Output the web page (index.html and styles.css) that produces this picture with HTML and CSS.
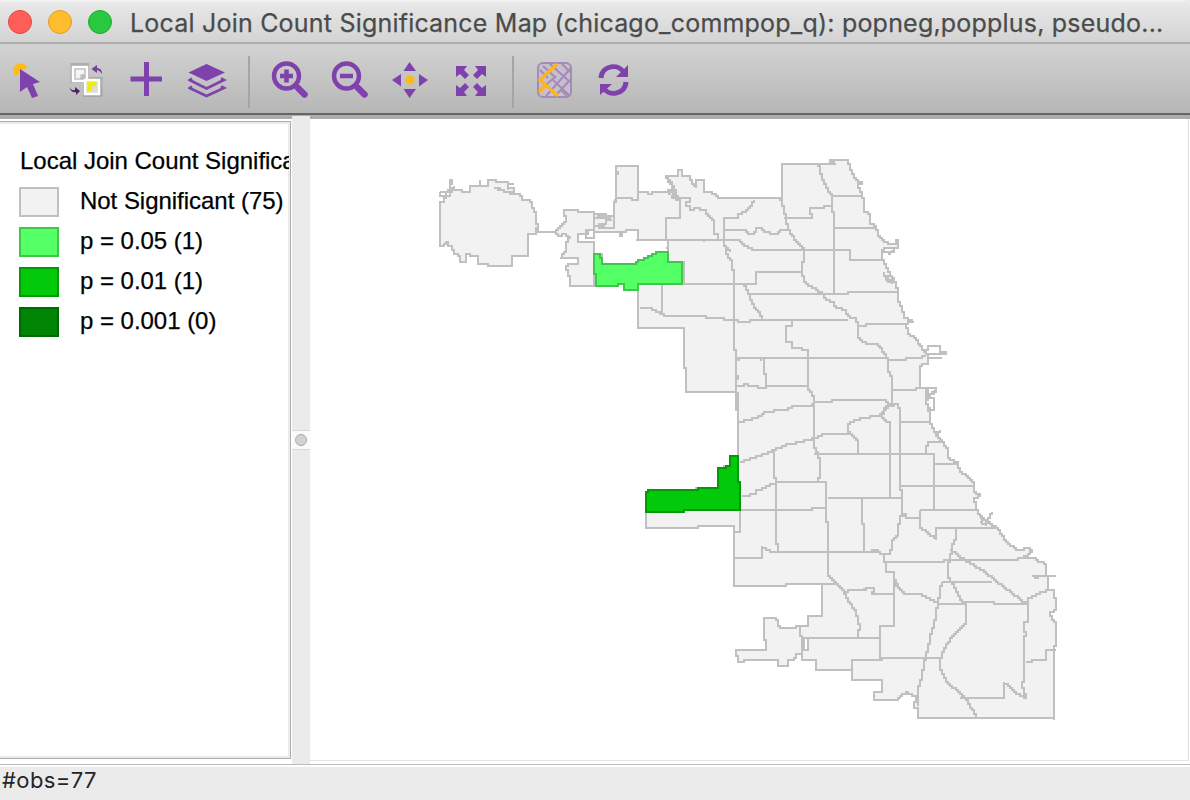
FILE: index.html
```html
<!DOCTYPE html>
<html lang="en">
<head>
<meta charset="utf-8">
<title>Local Join Count Significance Map</title>
<link rel="stylesheet" href="styles.css">
</head>
<body>
<div class="window">
  <header class="titlebar">
    <span class="light close"></span><span class="light minimize"></span><span class="light maximize"></span>
    <h1 class="title">Local Join Count Significance Map (chicago_commpop_q): popneg,popplus, pseudo...</h1>
  </header>
  <nav class="toolbar">
    <svg class="tool" viewBox="8 60 40 40"><path d="M16 74A5.2 5.2 0 1 1 25 67L20 69Z" fill="#fdbb16" stroke="#fdbb16" stroke-width="3"/><path d="M20 69L40 82L33 84L38 96L32 98L27 87L20 92Z" fill="#7f42ad"/></svg>
    <svg class="tool" viewBox="68 60 40 40"><path d="M70.500 63H89V77H102.500V97H83V83H70.500Z" fill="#999" opacity=".6"/><rect x="73" y="67" width="14" height="14" fill="#bbb" stroke="#fff" stroke-width="2.500"/><path d="M76 78V70H84V74H80V78Z" fill="#f5f5f5" stroke="#eee"/><rect x="85" y="80" width="14" height="14" fill="#ddd" stroke="#fff" stroke-width="2.500"/><path d="M87.500 91V82H96.500V86H92V91Z" fill="#f4ed00"/><path d="M91.500 69L97 65V68Q102 68 102 74Q99 70 97 70V73Z" fill="#73409b"/><path d="M70 87Q71 91 75 90V87L80 91L76 95V92Q70 93 70 87Z" fill="#4a235f"/></svg>
    <svg class="tool" viewBox="128 60 40 40"><path d="M146.500 62V96M130.500 79H162" stroke="#7f42ad" stroke-width="5"/></svg>
    <svg class="tool" viewBox="188 60 40 40"><path d="M206.500 64L225 72.500L206.500 81L188.500 72.500Z" fill="#7f42ad"/><path d="M192 78.500L189.500 80L206.500 88.500L224 80L221 78.500M192 86.500L189.500 88L206.500 96L224 88L221 86.500" fill="none" stroke="#7f42ad" stroke-width="2.600"/></svg>
    <span class="divider"></span>
    <svg class="tool" viewBox="268 60 40 40"><circle cx="286.500" cy="76" r="12.500" fill="none" stroke="#7f42ad" stroke-width="4.400"/><path d="M280 76H293M286.500 69.500V82.500M295.500 85L305 95" stroke="#7f42ad" stroke-width="4.600"/><path d="M298 88L304.500 94.500" stroke="#7f42ad" stroke-width="6.500" stroke-linecap="round"/></svg>
    <svg class="tool" viewBox="328 60 40 40"><circle cx="346.500" cy="76" r="12.500" fill="none" stroke="#7f42ad" stroke-width="4.400"/><path d="M340 76H353M355.500 85L365 95" stroke="#7f42ad" stroke-width="4.600"/><path d="M358 88L364.500 94.500" stroke="#7f42ad" stroke-width="6.500" stroke-linecap="round"/></svg>
    <svg class="tool" viewBox="388 60 40 40"><path d="M409.500 62L416 71H403.500ZM409.500 98L403.500 89H416ZM392 80L401 74V86.500ZM428 80L419 74V86.500Z" fill="#7f42ad"/><circle cx="410" cy="80" r="4.500" fill="#fdbb16"/></svg>
    <svg class="tool" viewBox="448 60 40 40"><path d="M456 66H467L464 70L469 75L465 79L460 74L456 77ZM486 66H475L478 70L473 75L477 79L482 74L486 77ZM456 96H467L464 92L469 87L465 83L460 88L456 85ZM486 96H475L478 92L473 87L477 83L482 88L486 85Z" fill="#7f42ad"/></svg>
    <span class="divider second"></span>
    <svg class="tool" viewBox="532 60 40 40"><rect x="538" y="63" width="33" height="34" rx="5" fill="#c5c0cb" stroke="#a58aba" stroke-width="2"/><path d="M543 66L556 78M550 64L570 82M562 64L570 72M571 68L546 96M570 80L555 96M553 80L570 96M540 70L548 78M540 90L556 76M561 90L567 96" stroke="#a58aba" stroke-width="2" fill="none"/><path d="M557 64L540 80L558 96M539 92L547 84" fill="none" stroke="#fdb51f" stroke-width="3.200"/></svg>
    <svg class="tool" viewBox="592 60 40 40"><path d="M601 78C602 65 619 63 624 73M626 82C625 95 608 97 603 87" fill="none" stroke="#7f42ad" stroke-width="5"/><path d="M628 65V77H616ZM600 95V84H612Z" fill="#7f42ad"/></svg>
  </nav>
  <main class="workspace">
    <aside class="legend">
      <div class="legend-title">Local Join Count Significance Map</div>
      <div class="entry"><i class="swatch none"></i><span>Not Significant (75)</span></div>
      <div class="entry"><i class="swatch p05"></i><span>p = 0.05 (1)</span></div>
      <div class="entry"><i class="swatch p01"></i><span>p = 0.01 (1)</span></div>
      <div class="entry"><i class="swatch p001"></i><span>p = 0.001 (0)</span></div>
    </aside>
    <div class="splitter"><span class="grip"><i></i></span></div>
    <section class="map-pane">
      <svg class="map" viewBox="310 119 878 641">
        <!-- City extent -->
        <g class="land">
          <path d="M440 246V202L444 200V197L449 194L452 190H462V192H470V186H480L487 186V180H494L496 182H504L508 184V188H514V191H508L500 188L494 188L505 192L512 194H520L522 199L529 200L531 206L533 212L536 214V224L538 226L536 230L537 232H555H537L536 234H528V256H511V266H491L488 264H478V256H470V254H466V261H460V256L453 251L452 246L448 245V242L444 246Z"/>
          <path d="M555 229L562 223L565 219L564 210H578V212L592 212L594 214L613 216L614 202H616V176L618 172L616 170V166H638V191L641 191H645L648 194H652V192H662L670 189L673 187L665 176H677V170H682V176H687L693 185L696 187V180H704V192L709 192L718 198H780L782 196V164H835V163L830 160H848L850 169L853 176L856 180L862 183L858 185L861 195L863 200V212L868 213L869 216V224L875 226L877 235L883 242L889 244H896V240L898 242V247H883L882 251V258L886 265L888 271L894 279L897 292L898 302L901 307L903 317L908 320L914 321L906 324L907 334L915 339L919 346L925 353L928 356V363L920 366V388H926V402L930 412V422L934 430L935 435L941 442L947 450L948 457L957 464L959 471L965 476L973 483L974 492L979 495L974 500L978 513L982 517L995 528L1003 537L1005 542L1015 549L1027 548L1031 552L1025 558H1033L1037 562H1043L1046 567V576H1048V589L1053 590L1054 597L1056 599L1055 610L1050 614L1051 620L1056 623V642L1054 650V720V718H918V708H914L916 695L912 693L907 692L901 696L898 700H874V692H882V680H852V670H816V660H802V654H797L793 660H788V666H778V660H747L744 662H738L736 650H766V640H764V618H776L778 624L780 628H793L795 626H808V616H822V584H787L786 586H734V532V526H700L698 528H646V492L648 490H696V488H718V468H724V465H730V456H738V410H736V392H686V368H684V328H640L638 326V284H683V262H668V252H655L647 257L636 264H601V254H594V286H573L570 283V278L567 272L566 266L568 264H578V258H560L565 250V245L567 238L565 234L562 235H558L555 229Z"/>
        </g>
        <path class="hole" d="M578 234V242H594V254H601V264H636L655 252H668V240H638V230H628L626 232H597L594 230H586L588 234L585 235V234Z"/>
        <path class="hole" d="M803 638H808V650H803Z"/>
        <!-- Shared borders, northwest -->
        <g class="line">
          <path d="M480 186V180M440 192V196H445V192H440M445 191L449 188V180H451L449 187L453 190M454 190V185M508 184H513M508 188V190M578 234H586M586 230V238H594V232M594 214V230M594 218H609V216L613 218V228H597M597 223H606V220H611M604 223V226H594M593 214L611 219M620 232V236H622V232M570 235L567 239"/>
          <path d="M614 200L616 198H630L632 200H638V192M665 176L673 188L670 192L662 192M673 188L676 195L677 198H690V202H686V206H690V210H694V208L704 209L708 216L713 222L714 234H717L718 240M667 193L672 190L676 192L671 198L680 202V218H666V240M671 194L677 200M673 188V194L678 199"/>
          <path d="M636 240H740L741 244L747 247L752 250H847L849 252L850 259H882M754 199L751 206L746 211L738 215V218H724V240L726 253L732 261L733 280L734 284V350H736V392M724 230H745L747 234H753L756 228H760L763 232L772 234H777L780 230H789"/>
          <path d="M780 198L783 210L786 218L788 230L792 236L797 243L803 249V260L801 265V271L804 281L808 285L815 289L821 294L826 300L834 303L836 307L843 309L848 316L849 318H856L858 327V337L862 341L868 343H877L879 348L885 355L887 362V370L891 378L892 383V403L888 406L879 416L863 418L852 421L848 425V432L854 438L858 442V454"/>
          <path d="M683 284H756V272H801M743 284L750 297L755 310L759 314L762 320M749 294H848V292H897M662 284V314M639 307L646 308L653 310L663 315H706V318H720L723 320H737V322H750V320H848M818 164L822 177L826 188L831 196H861M832 196V212H834V294M784 218H812V214H810V208H819L823 206H832V212M834 228H876M858 326L863 326L866 324H906M668 240V252M666 248H668M703 240V242M726 248L730 252"/>
        </g>
        <!-- Shared borders, west and central -->
        <g class="line">
          <path d="M792 320V326H786V342H792V347H797L803 350L808 352V388L810 391L813 397L814 403V446L818 454L820 463V476L818 481M736 358H885M764 358V370L766 380V387M736 386L743 386V384H748V386H757V388H766V386H808M738 422L745 420L756 417L763 412L781 410L792 408V406L810 406L814 402H830L832 400H886L887 404H898V408H900V490H902V513L906 518H919M879 416L885 422L890 424V497H892M740 461L751 458L763 453L778 448L788 444L800 441L814 437L823 434H843L848 431"/>
          <path d="M814 454H934V510M926 453V448L928 442H941M900 422H930M892 390H916V388H926M887 360H903L905 358H913L925 355M934 464H957M900 486H973M920 510H978M920 510V528L928 534L935 539V528H998M774 450V476L775 482H826V518L828 526V576L835 584L844 592L850 603L855 612L858 620L860 627L858 632V637M776 482V542L778 545V551H772L765 547L762 546V558H734"/>
          <path d="M741 495H750V493H755V490L763 487L770 484L776 483M740 510H810L812 508H826M740 510V532H734M827 498H902M862 498V523H864V552M890 486V496M773 552H877L879 554H889L892 546V539L897 533L898 524L900 522V515L906 514V518M872 552V550H878V552M736 360H740M759 360H761M736 375H738V380"/>
          <path d="M738 392V410M736 350V358M814 397V402M890 406L895 404M879 416L888 405L892 404"/>
        </g>
        <!-- Shared borders, south side -->
        <g class="line">
          <path d="M884 554V562H886V572H894V626H880V655L882 660M885 562H942L944 560H1013L1019 558L1025 556M955 528V540L951 546V550L947 565L948 578L951 583L958 593L962 602L966 606V623L953 635L946 645L942 653L940 661V670L948 683L957 692L967 702L971 710L976 716V718M950 550L963 560L983 572L1003 588L1025 603M942 582H992M942 582L938 603L934 625L930 637L928 650L923 663L922 678L918 690L917 705"/>
          <path d="M894 583L903 593H920L925 597L937 603H958L963 602H993L994 604H1027M1027 604L1028 597L1035 593L1040 591L1048 589M1028 604V615L1027 622L1024 624V632H1026V636H1024V682H1022V686L1025 697L1015 692L1010 686L1004 682V698H960M1025 662H1032V660H1046V650H1056M1032 576H1056M1034 577H1038V575"/>
          <path d="M787 584H836M844 592L847 590H866V588H874V592L872 594H894M800 626V633L802 638H880M802 638V660M852 670V660H880L882 658H940M864 588V590M893 580L897 586"/>
        </g>
        <!-- Lakefront piers and harbours -->
        <g class="line">
          <path d="M925 353L928 346H940V352H946V354H928M927 357H941M926 388H936V391L928 397H934V410H928M926 395L934 389M926 388L930 396L925 402L930 409L928 412M935 434L939 430M908 321H914M979 521L985 525L987 517L992 512M980 518L988 524M982 524V518L988 522M882 251H893V247M887 253L891 250M883 271L885 280L891 283L894 279M889 271L887 280L891 281"/>
        </g>
        <path class="sig05" d="M594 254H600L601 264H636L638 260L646 257L655 252H668V262H682V284H638V290H624V284H620L618 286H596V274H594Z"/>
        <path class="sig01" d="M646 491L648 490H695L697 488H718V468H723L725 466H730V456H738V481H740V510H684V512H646Z"/>
      </svg>
    </section>
  </main>
  <footer class="status">#obs=77</footer>
</div>
<script src="map.js"></script>
</body>
</html>
```
FILE: map.js
```js
// Trace every border on a 2px grid so diagonals become stair steps.
const GRID = 2;

function parsePath(d) {
  const tokens = d.match(/[MLHVZ]|[\d.]+/g);
  const subpaths = [];
  let cmd = "M", i = 0, x = 0, y = 0;
  while (i < tokens.length) {
    if (/[A-Z]/.test(tokens[i])) {
      cmd = tokens[i++];
      if (cmd === "Z") {
        const s = subpaths[subpaths.length - 1];
        s.closed = true;
        s.points.push(s.points[0]);
        continue;
      }
      if (cmd === "M") subpaths.push({ points: [], closed: false });
    }
    if (cmd === "H") x = +tokens[i++];
    else if (cmd === "V") y = +tokens[i++];
    else { x = +tokens[i++]; y = +tokens[i++]; }
    subpaths[subpaths.length - 1].points.push([Math.round(x / GRID), Math.round(y / GRID)]);
  }
  return subpaths;
}

function stepPath({ points, closed }) {
  let [x, y] = points[0];
  let d = `M${x * GRID} ${y * GRID}`;
  for (const [tx, ty] of points.slice(1)) {
    const dx = Math.abs(tx - x), dy = Math.abs(ty - y);
    const sx = Math.sign(tx - x), sy = Math.sign(ty - y);
    let err = dx - dy;
    while (x !== tx || y !== ty) {
      const e = 2 * err;
      if (e > -dy) { err -= dy; x += sx; d += `H${x * GRID}`; }
      if (e < dx) { err += dx; y += sy; d += `V${y * GRID}`; }
    }
  }
  return d + (closed ? "Z" : "");
}

document.querySelectorAll(".map path").forEach(path => {
  path.setAttribute("d", parsePath(path.getAttribute("d")).map(stepPath).join(""));
});
```
FILE: styles.css
```css
* { box-sizing: border-box; }
body { margin: 0; background: #ebebeb; overflow: hidden; }
.window { width: 1190px; height: 800px; display: flex; flex-direction: column; background: #ebebeb; }
.titlebar { height: 44px; display: flex; align-items: center; gap: 16px; padding: 1px 0 0 8px; background: linear-gradient(#f4f4f4 0, #e8e8e8 3px, #d3d3d3 42px); border-bottom: 2px solid #adadad; border-radius: 0 8px 0 0; flex: none; }
.light { width: 24px; height: 24px; border-radius: 50%; border: 1px solid #e14640; background: #ff5f57; flex: none; }
.minimize { background: #febc2e; border-color: #dfa023; }
.maximize { background: #28c840; border-color: #1dac2b; }
.title { margin: 0 0 0 2px; padding-top: 3px; color: #4b4b4b; font: 400 25px/40px Inter, sans-serif; letter-spacing: .205px; -webkit-text-stroke: .25px #4b4b4b; white-space: nowrap; }
.toolbar { height: 71px; display: flex; align-items: flex-start; gap: 20px; padding: 16px 0 0 8px; background: linear-gradient(#d3d3d3, #b6b6b6); border-bottom: 2px solid #646864; flex: none; }
.tool { width: 40px; height: 40px; flex: none; }
.divider { width: 2px; height: 52px; margin: -4px -2px 0 0; background: #a5a5a5; flex: none; }
.second { margin-left: 4px; margin-right: -2px; }
.workspace { height: 649px; display: flex; border-top: 4px solid #acacac; background: #fff; flex: none; }
.legend { width: 291px; height: 638px; margin-top: 2px; padding: 19px 0 0 19px; border: solid #adadad; border-width: 1px 1px 1px 0; box-shadow: inset -2px -2px #ebebeb, inset 0 2px #ebebeb; overflow: hidden; flex: none; color: #000; font: 24px/40px "Liberation Sans", Arial, sans-serif; -webkit-text-stroke: .25px #000; }
.legend-title { width: 269px; margin-left: 1px; overflow: hidden; white-space: nowrap; letter-spacing: -.02px; }
.entry { display: flex; align-items: center; gap: 21px; height: 40px; white-space: nowrap; letter-spacing: -.03px; }
.swatch { width: 40px; height: 30px; margin-top: 2px; border: 2px solid #c0c0c0; background: #f2f2f2; flex: none; }
.p05 { background: #55ff66; border-color: #40c64d; }
.p01 { background: #02ca0b; border-color: #029a08; }
.p001 { background: #008403; border-color: #006a02; }
.splitter { width: 18px; margin: -3px 0 0 1px; display: flex; align-items: center; background: #ebebeb; flex: none; }
.grip { width: 18px; height: 20px; display: flex; align-items: center; justify-content: center; background: #fafafa; border: solid #d8d8d8; border-width: 1px 0; }
.grip i { width: 12px; height: 12px; border: 1px solid #aaa; border-radius: 50%; background: #d2d2d2; }
.map-pane { width: 879px; height: 642px; border-right: 1px solid #ddd; border-bottom: 1px solid #e5e5e5; flex: none; }
.map { display: block; width: 878px; height: 641px; shape-rendering: crispEdges; stroke-width: 2; }
.land { fill: #f2f2f2; stroke: #c0c0c0; }
.line { fill: none; stroke: #c0c0c0; }
.hole { fill: #fff; stroke: #c0c0c0; }
.sig05 { fill: #55ff66; stroke: #40c64d; }
.sig01 { fill: #02ca0b; stroke: #029a08; }
.status { flex: 1; border-top: 1px solid #bdbdbd; box-shadow: inset 0 2px #fff; padding-left: 2px; color: #252525; font: 22px/31px Inter, sans-serif; letter-spacing: .4px; }
```
